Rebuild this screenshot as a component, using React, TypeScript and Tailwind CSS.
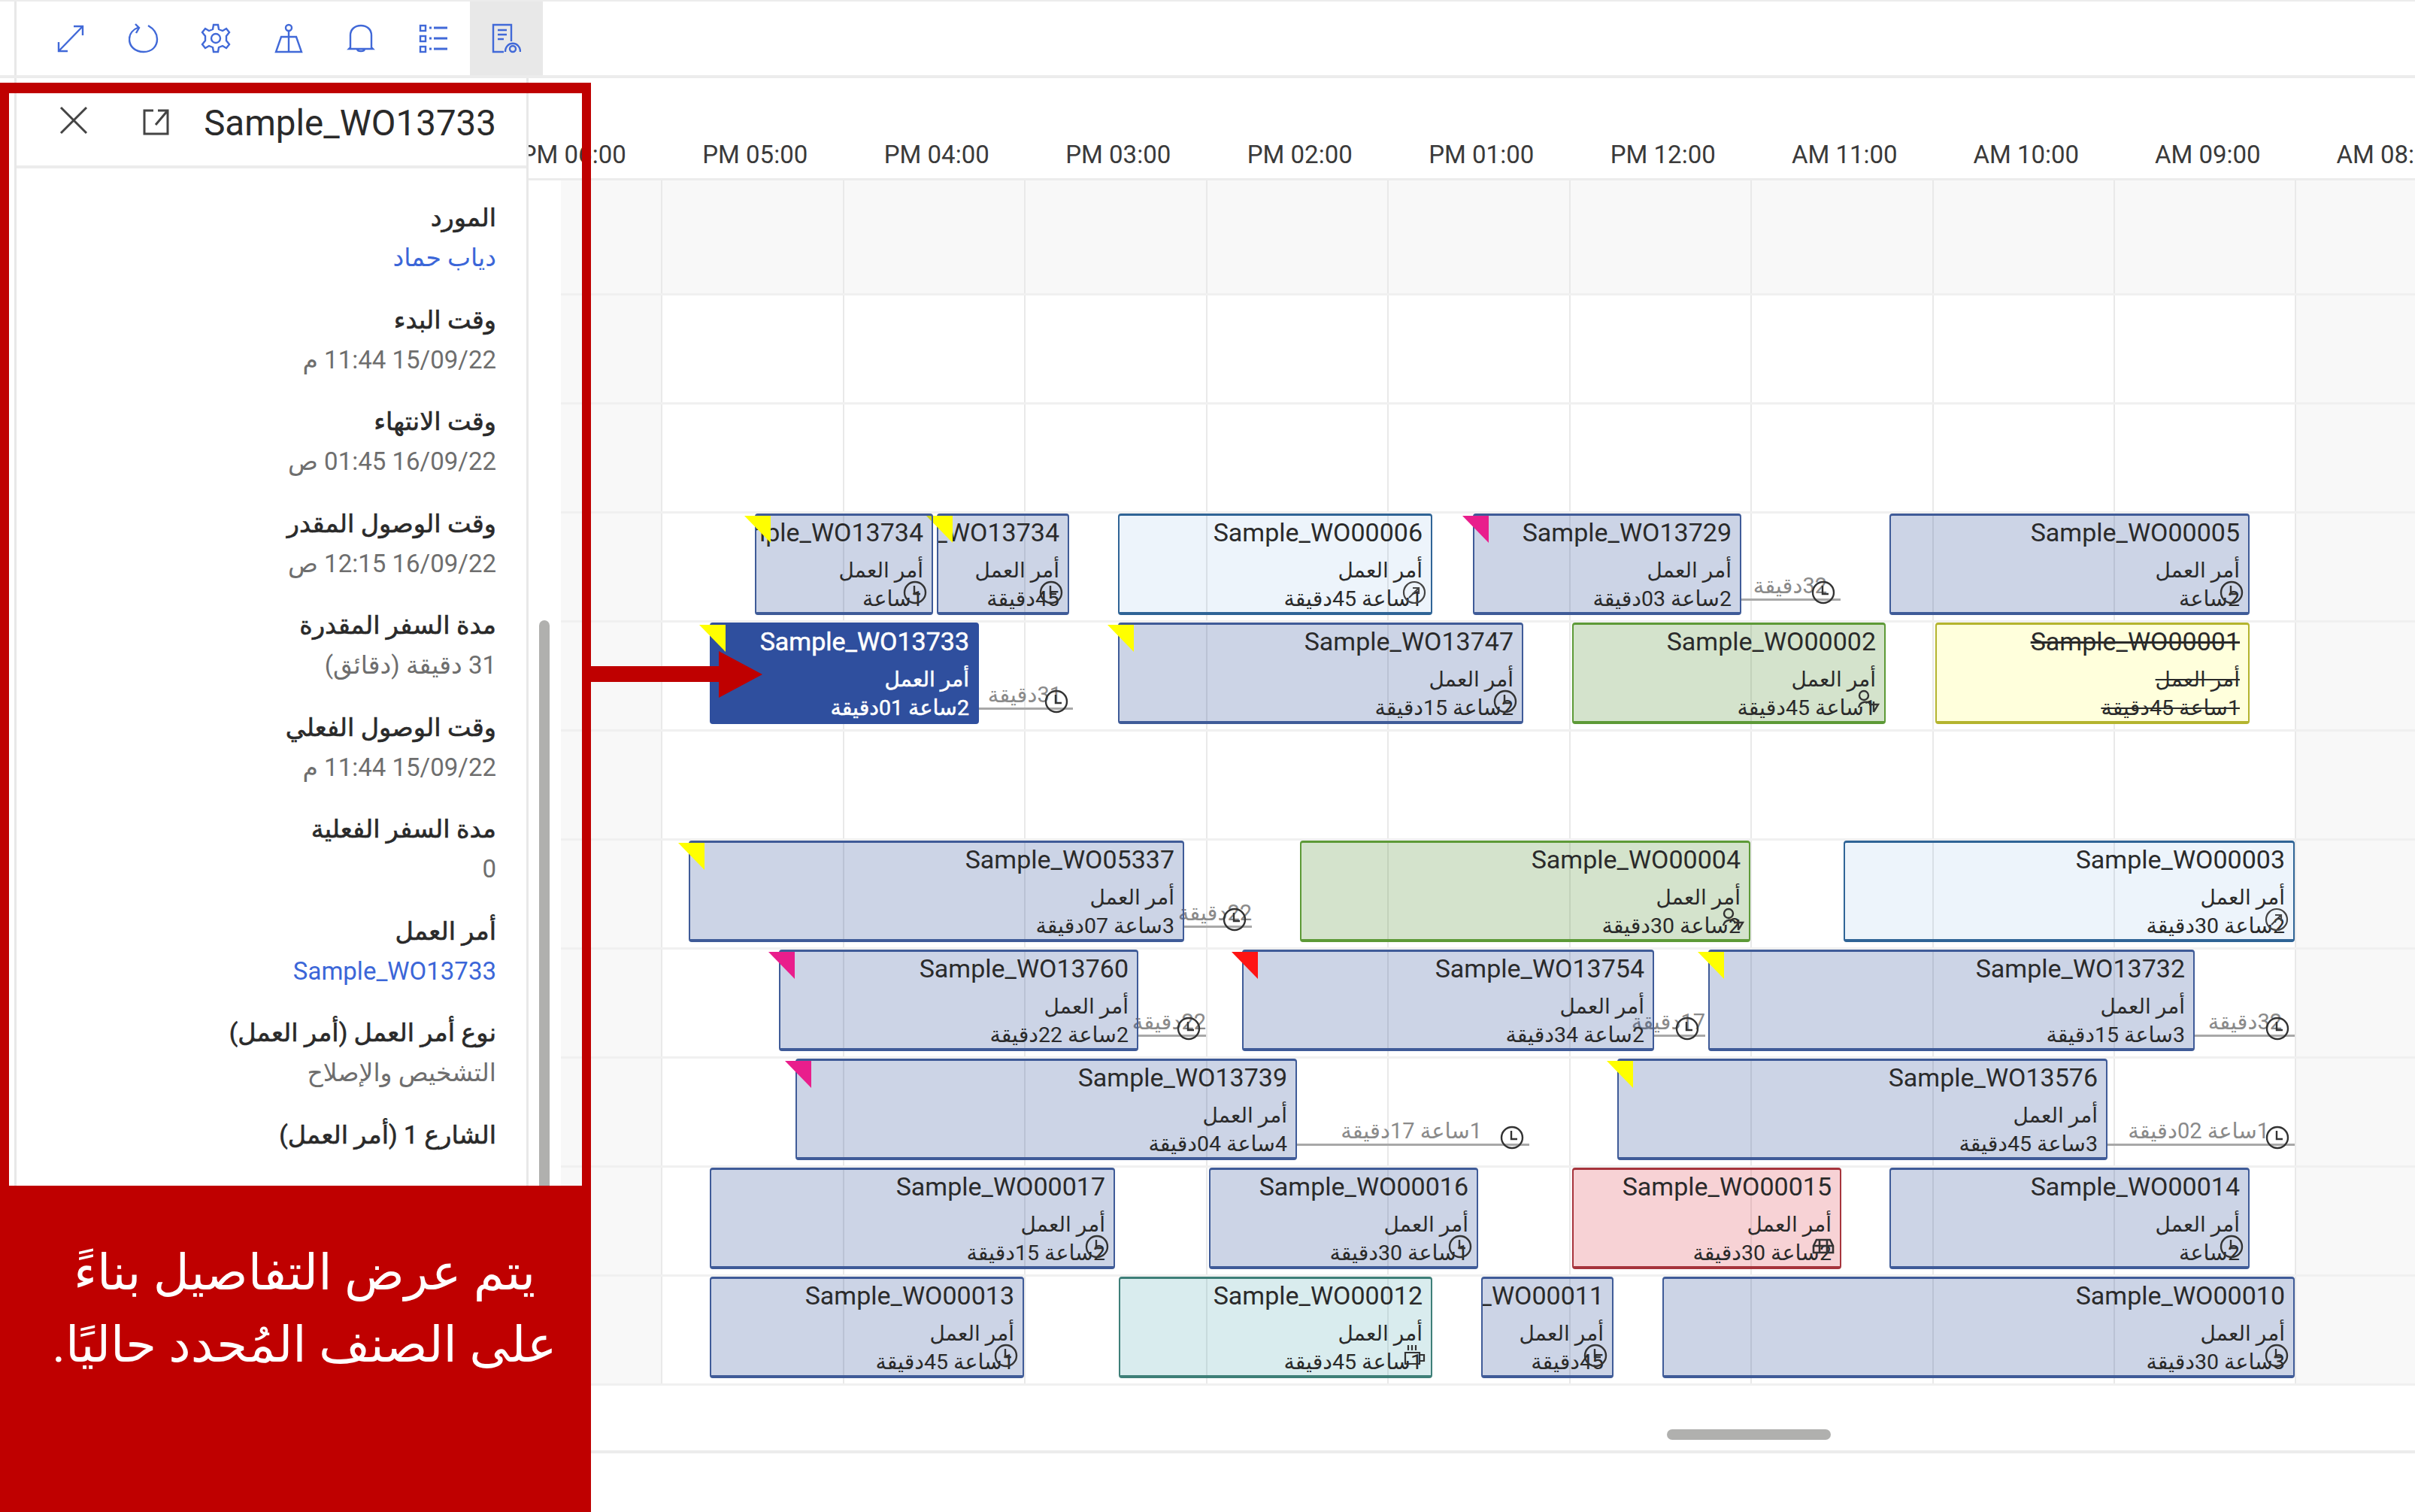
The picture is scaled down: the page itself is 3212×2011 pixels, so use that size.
import React from "react";

type Variant = "base" | "selected" | "sky" | "green" | "yellow" | "pink" | "teal";
type Flag = "yellow" | "pink" | "red";
type Icon = "clock" | "check" | "person" | "coffee" | "car" | "none";
type Bar = { t: string; x: number; r: number; d: string; v?: Variant; f?: Flag; i?: Icon };
type Link = { x: number; r: number; c: number; tr: number; text: string };

const variantClass: Record<Variant, string> = {
  base: "bg-[#00288233] border-[#3f5b98] text-[#2a2a2a]",
  selected: "bg-[#2f4f9e] border-[#2f4f9e] text-white [-webkit-text-stroke:0.5px_#ffffff]",
  sky: "bg-[#0066cc12] border-[#2f6496] text-[#2a2a2a]",
  green: "bg-[#3c7f1538] border-[#5d9a37] text-[#2a2a2a]",
  yellow: "bg-[#ffffdc] border-[#b4b42e] text-[#2a2a2a] line-through",
  pink: "bg-[#d4121f30] border-[#a6343c] text-[#2a2a2a]",
  teal: "bg-[#2a94a02e] border-[#3e7f78] text-[#2a2a2a]",
};
const flagClass: Record<Flag, string> = {
  yellow: "bg-[#ffff00]",
  pink: "bg-[#e91e8c]",
  red: "bg-[#ff1414]",
};

const rows: { bars: Bar[]; links: Link[] }[] = [
  { bars: [], links: [] },
  { bars: [], links: [] },
  { bars: [], links: [] },
  {
    links: [{ x: 2316, r: 2448, c: 2425, tr: 2430, text: "32دقيقة" }],
    bars: [
      { t: "Sample_WO13734", x: 1246, r: 1422, d: "45دقيقة", f: "yellow" },
      { t: "Sample_WO13734", x: 1004, r: 1241, d: "1ساعة", f: "yellow" },
      { t: "Sample_WO00006", x: 1487, r: 1905, d: "1ساعة 45دقيقة", v: "sky", i: "check" },
      { t: "Sample_WO13729", x: 1959, r: 2316, d: "2ساعة 03دقيقة", f: "pink", i: "none" },
      { t: "Sample_WO00005", x: 2513, r: 2992, d: "2ساعة" },
    ],
  },
  {
    links: [{ x: 1302, r: 1427, c: 1405, tr: 1412, text: "31دقيقة" }],
    bars: [
      { t: "Sample_WO13733", x: 944, r: 1302, d: "2ساعة 01دقيقة", v: "selected", f: "yellow", i: "none" },
      { t: "Sample_WO13747", x: 1487, r: 2026, d: "2ساعة 15دقيقة", f: "yellow" },
      { t: "Sample_WO00002", x: 2091, r: 2508, d: "1ساعة 45دقيقة", v: "green", i: "person" },
      { t: "Sample_WO00001", x: 2574, r: 2992, d: "1ساعة 45دقيقة", v: "yellow", i: "none" },
    ],
  },
  { bars: [], links: [] },
  {
    links: [{ x: 1575, r: 1665, c: 1642, tr: 1665, text: "22دقيقة" }],
    bars: [
      { t: "Sample_WO05337", x: 916, r: 1575, d: "3ساعة 07دقيقة", f: "yellow", i: "none" },
      { t: "Sample_WO00004", x: 1729, r: 2328, d: "2ساعة 30دقيقة", v: "green", i: "person" },
      { t: "Sample_WO00003", x: 2452, r: 3052, d: "2ساعة 30دقيقة", v: "sky", i: "check" },
    ],
  },
  {
    links: [
      { x: 1514, r: 1604, c: 1581, tr: 1604, text: "22دقيقة" },
      { x: 2200, r: 2268, c: 2244, tr: 2268, text: "17دقيقة" },
      { x: 2919, r: 3052, c: 3029, tr: 3035, text: "32دقيقة" },
    ],
    bars: [
      { t: "Sample_WO13760", x: 1036, r: 1514, d: "2ساعة 22دقيقة", f: "pink", i: "none" },
      { t: "Sample_WO13754", x: 1652, r: 2200, d: "2ساعة 34دقيقة", f: "red", i: "none" },
      { t: "Sample_WO13732", x: 2272, r: 2919, d: "3ساعة 15دقيقة", f: "yellow", i: "none" },
    ],
  },
  {
    links: [
      { x: 1725, r: 2034, c: 2011, tr: 1971, text: "1ساعة 17دقيقة" },
      { x: 2803, r: 3052, c: 3029, tr: 3018, text: "1ساعة 02دقيقة" },
    ],
    bars: [
      { t: "Sample_WO13739", x: 1058, r: 1725, d: "4ساعة 04دقيقة", f: "pink", i: "none" },
      { t: "Sample_WO13576", x: 2151, r: 2803, d: "3ساعة 45دقيقة", f: "yellow", i: "none" },
    ],
  },
  {
    links: [],
    bars: [
      { t: "Sample_WO00017", x: 944, r: 1483, d: "2ساعة 15دقيقة" },
      { t: "Sample_WO00016", x: 1608, r: 1966, d: "1ساعة 30دقيقة" },
      { t: "Sample_WO00015", x: 2091, r: 2449, d: "2ساعة 30دقيقة", v: "pink", i: "car" },
      { t: "Sample_WO00014", x: 2513, r: 2992, d: "2ساعة" },
    ],
  },
  {
    links: [],
    bars: [
      { t: "Sample_WO00013", x: 944, r: 1362, d: "1ساعة 45دقيقة" },
      { t: "Sample_WO00012", x: 1488, r: 1905, d: "1ساعة 45دقيقة", v: "teal", i: "coffee" },
      { t: "Sample_WO00011", x: 1970, r: 2146, d: "45دقيقة" },
      { t: "Sample_WO00010", x: 2211, r: 3052, d: "3ساعة 30دقيقة" },
    ],
  },
];

const hours = ["PM 06:00", "PM 05:00", "PM 04:00", "PM 03:00", "PM 02:00", "PM 01:00", "PM 12:00", "AM 11:00", "AM 10:00", "AM 09:00", "AM 08:00"];

const fields: { l: string; v?: string; link?: boolean }[] = [
  { l: "المورد", v: "دياب حماد", link: true },
  { l: "وقت البدء", v: "15/09/22 11:44 م" },
  { l: "وقت الانتهاء", v: "16/09/22 01:45 ص" },
  { l: "وقت الوصول المقدر", v: "16/09/22 12:15 ص" },
  { l: "مدة السفر المقدرة", v: "31 دقيقة (دقائق)" },
  { l: "وقت الوصول الفعلي", v: "15/09/22 11:44 م" },
  { l: "مدة السفر الفعلية", v: "0" },
  { l: "أمر العمل", v: "Sample_WO13733", link: true },
  { l: "نوع أمر العمل (أمر العمل)", v: "التشخيص والإصلاح" },
  { l: "الشارع 1 (أمر العمل)", v: "" },
];

const Clock = () => (
  <svg viewBox="0 0 32 32" className="h-full w-full" fill="none" stroke="#333" strokeWidth="2.4">
    <circle cx="16" cy="16" r="14" />
    <path d="M15 7V18H23" />
  </svg>
);
const Check = () => (
  <svg viewBox="0 0 32 32" className="h-full w-full" fill="none" stroke="#444" strokeWidth="2.2">
    <circle cx="16" cy="16" r="14" />
    <path d="M9 23L22 10M14 10H22V18" />
  </svg>
);
const Person = () => (
  <svg viewBox="0 0 32 32" className="h-full w-full" fill="none" stroke="#333" strokeWidth="2.4">
    <circle cx="11" cy="8" r="6" />
    <path d="M4 24C6 15 17 15 20 20M24 16V30M18 20H30L24 30" />
  </svg>
);
const Coffee = () => (
  <svg viewBox="0 0 32 32" className="h-full w-full" fill="none" stroke="#333" strokeWidth="2.2">
    <path d="M8 2V9M13 2V9M18 2V9M4 12H23V27H4ZM23 15H29V23H23" />
  </svg>
);
const Car = () => (
  <svg viewBox="0 0 32 32" className="h-full w-full" fill="none" stroke="#333" strokeWidth="2.6">
    <path d="M3 24V15L7 7H25L29 15V24ZM3 15H29M11 7V24M21 7V24" />
  </svg>
);
const iconOf: Record<string, React.ReactNode> = {
  clock: <Clock />,
  check: <Check />,
  person: <Person />,
  coffee: <Coffee />,
  car: <Car />,
};

function ToolIcon({ kind }: { kind: number }) {
  const s = { fill: "none", stroke: "#4169d8", strokeWidth: 2.4, className: "h-[40px] w-[40px]", viewBox: "0 0 40 40" };
  if (kind === 0)
    return (
      <svg {...s}>
        <path d="M4 37L36 4M24 4H36V16M4 25V37H16" />
      </svg>
    );
  if (kind === 1)
    return (
      <svg {...s}>
        <path d="M14 5C6 8 1 14 1 21C1 31 9 38 20 38C31 38 38 31 38 21C38 13 33 7 26 3M9 1L14 6L10 13" />
      </svg>
    );
  if (kind === 2)
    return (
      <svg {...s}>
        <path d="M17 2H23L24 8L29 10L34 7L38 12L34 17V23L38 28L34 33L29 30L24 32L23 38H17L16 32L11 30L6 33L2 28L6 23V17L2 12L6 7L11 10L16 8Z" />
        <circle cx="20" cy="20" r="6" />
      </svg>
    );
  if (kind === 3)
    return (
      <svg {...s}>
        <circle cx="20" cy="6" r="4" />
        <path d="M20 10V38M10 18H30L37 38H3Z" />
      </svg>
    );
  if (kind === 4)
    return (
      <svg {...s}>
        <path d="M6 32V16C6 8 12 3 20 3C28 3 34 8 34 16V32L36 34H4ZM15 34C15 38 25 38 25 34" />
      </svg>
    );
  if (kind === 5)
    return (
      <svg {...s}>
        <rect x="2" y="3" width="7" height="7" />
        <rect x="2" y="17" width="7" height="7" />
        <rect x="2" y="31" width="7" height="7" />
        <path d="M14 6H17M20 6H38M14 20H17M20 20H38M14 34H17M20 34H38" strokeWidth="3" />
      </svg>
    );
  return (
    <svg {...s}>
      <path d="M27 24V2H3V38H17M9 9H21M9 15H21M9 21H17" />
      <path d="M19 38C19 23 39 23 39 38" />
      <circle cx="29" cy="34" r="4" />
    </svg>
  );
}

const CX = 879;

function Connector({ l }: { l: Link }) {
  return (
    <div className="absolute top-0 h-[135px]" style={{ left: l.x - CX, width: l.r - l.x }}>
      <div className="absolute left-0 right-0 top-[113px] h-[3px] bg-[#a8a8a8]" />
      <div
        dir="rtl"
        className="absolute top-[76px] whitespace-nowrap text-[29px] leading-[40px] text-[#8a8a8a]"
        style={{ right: l.r - l.tr }}
      >
        {l.text}
      </div>
      <div className="absolute top-[89px] h-[32px] w-[32px]" style={{ left: l.c - l.x - 16 }}>
        <Clock />
      </div>
    </div>
  );
}

function BarView({ b }: { b: Bar }) {
  const v = b.v ?? "base";
  const icon = b.i ?? "clock";
  return (
    <div className="absolute top-0 h-[135px]" style={{ left: b.x - CX, width: b.r - b.x }}>
      <div
        dir="rtl"
        className={`h-full overflow-hidden whitespace-nowrap rounded-[4px] border-2 border-t-[3px] border-b-[4px] pr-[11px] ${variantClass[v]}`}
      >
        <div className="mt-[2px] text-[34px] leading-[40px]">{b.t}</div>
        <div className="mt-[13px] text-[28px] leading-[36px]">أمر العمل</div>
        <div className="mt-[2px] text-[28.5px] leading-[36px]">{b.d}</div>
      </div>
      {b.f && (
        <div
          className={`absolute left-[-14px] top-[3px] h-[36px] w-[35px] [clip-path:polygon(0_0,100%_0,100%_100%)] ${flagClass[b.f]}`}
        />
      )}
      {icon !== "none" && <div className="absolute right-[8px] top-[89px] h-[32px] w-[32px]">{iconOf[icon]}</div>}
    </div>
  );
}

function Row({ i }: { i: number }) {
  const row = rows[i];
  const first = i === 0;
  return (
    <div className={`flex ${first ? "h-[153px]" : "h-[145px]"}`}>
      <div className="w-[43px] shrink-0 bg-white" />
      <div className="flex flex-1 border-b-[3px] border-[#f0f0f0]">
        <div className="w-[133px] shrink-0 bg-[#f8f8f8]" />
        <div className={`relative w-[2173px] shrink-0 ${first ? "bg-[#f8f8f8]" : "bg-white"}`}>
          <div className="absolute inset-0 flex">
            {Array.from({ length: 9 }).map((_, k) => (
              <div key={k} className="h-full w-[241.5px] shrink-0 border-l-2 border-[#e9e9e9]" />
            ))}
          </div>
          {row.links.map((l, k) => (
            <Connector key={k} l={l} />
          ))}
          {row.bars.map((b, k) => (
            <BarView key={k} b={b} />
          ))}
        </div>
        <div className="flex-1 border-l-2 border-[#e9e9e9] bg-[#f8f8f8]" />
      </div>
    </div>
  );
}

export default function App() {
  return (
    <div className="relative h-[2011px] w-[3212px] overflow-hidden bg-white font-[Roboto,'Noto_Sans','DejaVu_Sans',sans-serif] text-[#2a2a2a]">
      <div className="flex h-[104px] border-b-[4px] border-t-2 border-[#ececec] pl-[19px]">
        <div className="flex border-l-[3px] border-[#e8e8e8] pl-[24px]">
          {[0, 1, 2, 3, 4, 5, 6].map((k) => (
            <div key={k} className={`flex h-full w-[96.5px] items-center justify-center ${k === 6 ? "bg-[#e8e8e8]" : ""}`}>
              <ToolIcon kind={k} />
            </div>
          ))}
        </div>
      </div>
      <div className="flex h-[1907px]">
        <aside className="ml-[19px] flex w-[684px] shrink-0 flex-col border-x-[3px] border-[#e8e8e8]">
          <div className="flex h-[120px] shrink-0 items-start border-b-[4px] border-[#ececec] pl-[57px] pr-[40px]">
            <svg viewBox="0 0 38 38" className="mt-[37px] h-[38px] w-[38px]" fill="none" stroke="#444" strokeWidth="3">
              <path d="M2 2L36 36M36 2L2 36" />
            </svg>
            <svg viewBox="0 0 36 36" className="ml-[73px] mt-[40px] h-[36px] w-[36px]" fill="none" stroke="#444" strokeWidth="3">
              <path d="M14 3H2V34H33V14M20 3H33V15M33 3L17 22" />
            </svg>
            <div className="ml-auto mt-[30px] text-[47.5px] leading-[60px] text-[#2a2a2a]">Sample_WO13733</div>
          </div>
          <div className="relative flex-1 overflow-hidden pr-[40px] pt-[44px]" dir="rtl">
            {fields.map((f) => (
              <div key={f.l} className="h-[135.5px]">
                <div className="text-[33.5px] leading-[44px] text-[#2a2a2a] [-webkit-text-stroke:0.6px_#2a2a2a]">{f.l}</div>
                <div className={`mt-[9px] text-[33px] leading-[44px] ${f.link ? "text-[#3b66d8]" : "text-[#6e6e6e]"}`}>{f.v}</div>
              </div>
            ))}
          </div>
        </aside>
        <div className="relative flex min-w-0 flex-1 flex-col overflow-hidden">
          <div className="relative h-[133px] shrink-0 overflow-hidden">
            <div className="absolute left-[-61px] top-[77px] flex">
              {hours.map((h) => (
                <div key={h} className="w-[241.5px] shrink-0 whitespace-nowrap text-center text-[33px] leading-[50px] text-[#3a3a3a]">
                  {h}
                </div>
              ))}
            </div>
          </div>
          <div className="shrink-0 border-t-[3px] border-[#ececec]">
            {rows.map((_, i) => (
              <Row key={i} i={i} />
            ))}
          </div>
          <div className="relative h-[90px] shrink-0 border-b-[4px] border-[#ececec]">
            <div className="absolute left-[1514px] top-[58px] h-[14px] w-[218px] rounded-full bg-[#b0b0ae]" />
          </div>
          <div className="absolute left-[14px] top-[721px] h-[800px] w-[14px] rounded-t-full bg-[#b0b0ae]" />
        </div>
      </div>

      {/* Callout drawn on top of the screenshot */}
      <div className="absolute left-0 top-[110px] h-[1467px] w-[786px] border-x-[12px] border-t-[14px] border-[#bf0000]" />
      <div
        dir="rtl"
        className="absolute left-0 top-[1577px] h-[434px] w-[786px] bg-[#bf0000] pl-[24px] pt-[68px] text-center text-[66px] leading-[96px] text-white"
      >
        <div>يتم عرض التفاصيل بناءً</div>
        <div>على الصنف المُحدد حاليًا.</div>
      </div>
      <svg className="absolute left-[776px] top-[866px] h-[62px] w-[240px]" viewBox="0 0 240 62">
        <path d="M0 20H180V0L238 31L180 62V41H0Z" fill="#bf0000" />
      </svg>
    </div>
  );
}
